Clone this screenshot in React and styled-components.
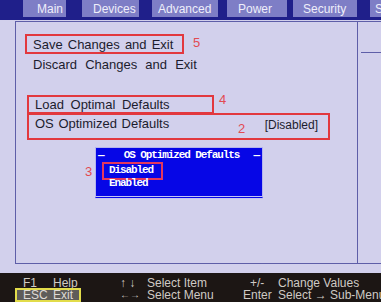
import React from 'react';
import styled, { createGlobalStyle } from 'styled-components';

const GlobalStyle = createGlobalStyle`
    * { box-sizing: border-box; }
    body {
        margin: 0;
        overflow: hidden;
        font-family: "Liberation Sans", Arial, sans-serif;
    }
`

const tabs = [
    { label: 'Main', w: 43, ml: 23, pl: 14 },
    { label: 'Devices', w: 57, ml: 16, pl: 11 },
    { label: 'Advanced', w: 66, ml: 13, pl: 6 },
    { label: 'Power', w: 60, ml: 9, pl: 11 },
    { label: 'Security', w: 64, ml: 6, pl: 10 },
    { label: 'S', w: 30, ml: 13, pl: 5 },
];

export default function App() {
    return (
        <Page>
            <GlobalStyle />
            <TabBar>
                {tabs.map(tab => (
                    <Tab key={tab.label} $w={tab.w} $ml={tab.ml} $pl={tab.pl}>{tab.label}</Tab>
                ))}
            </TabBar>

            <Body>
                <Panels>
                    <LeftPanel>
                        <Row $boxed $ml={9} $w={159} $h={20} $mt={12} $ws={1.5}>
                            Save Changes and Exit
                            <Note $x={166} $y={0}>5</Note>
                        </Row>
                        <Row $ml={9} $h={20} $ws={4.5}>Discard Changes and Exit</Row>
                        <Row $boxed $ml={11} $w={187} $h={19} $mt={21} $ws={3}>
                            Load Optimal Defaults
                            <Note $x={190} $y={-4}>4</Note>
                        </Row>
                        <Row $boxed $ml={11} $w={303} $h={27} $mt={-1} $ws={1} $top>
                            OS Optimized Defaults
                            <Value>[Disabled]</Value>
                            <Note $x={209} $y={7}>2</Note>
                        </Row>

                        <Popup>
                            <PopupTitle>
                                <span>—</span>
                                <span>OS Optimized Defaults</span>
                                <span>—</span>
                            </PopupTitle>
                            <Option $selected>
                                Disabled
                                <Note $x={-19} $y={1}>3</Note>
                            </Option>
                            <Option>Enabled</Option>
                        </Popup>
                    </LeftPanel>
                    <RightPanel>
                        <Divider />
                    </RightPanel>
                </Panels>
            </Body>

            <Footer>
                <KeyItem $pl={6}><Key $w={30}>F1</Key>Help</KeyItem>
                <KeyItem $pl={6} $active><Key $w={30}>ESC</Key>Exit</KeyItem>
                <KeyItem><Key $w={27}>↑ ↓</Key>Select Item</KeyItem>
                <KeyItem><Key $w={27} $small>←→</Key>Select Menu</KeyItem>
                <KeyItem $pl={7}><Key $w={28}>+/-</Key>Change Values</KeyItem>
                <KeyItem><Key $w={35}>Enter</Key>Select → Sub-Menu</KeyItem>
            </Footer>
        </Page>
    );
}

const Page = styled.div`
    width: 381px;
    height: 302px;
    display: flex;
    flex-direction: column;
    overflow: hidden;
    background: #d2d0ec;
`
const TabBar = styled.div`
    height: 20px;
    flex-shrink: 0;
    display: flex;
    align-items: flex-start;
    background: #1f1f8a;
    overflow: hidden;
`
const Tab = styled.div`
    flex-shrink: 0;
    width: ${p => p.$w}px;
    height: 17px;
    margin-left: ${p => p.$ml}px;
    padding-left: ${p => p.$pl}px;
    background: #7e7ec6;
    color: #eeeefa;
    font-size: 12px;
    line-height: 18px;
    white-space: nowrap;
`
const Body = styled.div`
    flex: 1;
    padding: 1px 0 9px 15px;
    background: #d2d0ec;
`
const Panels = styled.div`
    height: 243px;
    display: grid;
    grid-template-columns: 343px 1fr;
`
const LeftPanel = styled.div`
    position: relative;
    display: flex;
    flex-direction: column;
    align-items: flex-start;
    border: 1px solid #5e5ea8;
    color: #1c1c2e;
    font-size: 13px;
`
const RightPanel = styled.div`
    border-top: 1px solid #5e5ea8;
    border-bottom: 1px solid #5e5ea8;
    padding-top: 30px;
`
const Divider = styled.div`
    height: 1px;
    margin-left: 3px;
    background: #5e5ea8;
`
const Row = styled.div`
    position: relative;
    display: flex;
    align-items: ${p => p.$top ? 'flex-start' : 'center'};
    width: ${p => p.$w ? `${p.$w}px` : 'auto'};
    height: ${p => p.$h}px;
    margin-top: ${p => p.$mt || 0}px;
    margin-left: ${p => p.$ml}px;
    padding-left: 6px;
    padding-top: ${p => p.$top ? '1px' : '0'};
    border: 2px solid ${p => p.$boxed ? '#e2383e' : 'transparent'};
    word-spacing: ${p => p.$ws}px;
    white-space: nowrap;
    line-height: 15px;
`
const Value = styled.span`
    margin-left: auto;
    margin-top: 2px;
    padding-right: 10px;
    font-size: 12px;
    word-spacing: 0;
`
const Note = styled.span`
    position: absolute;
    left: ${p => p.$x}px;
    top: ${p => p.$y}px;
    color: #e24a52;
    font-family: "Liberation Sans", Arial, sans-serif;
    font-size: 13px;
    font-weight: 400;
    line-height: 13px;
    letter-spacing: 0;
`
const Popup = styled.div`
    position: absolute;
    left: 79px;
    top: 125px;
    width: 168px;
    height: 52px;
    background: #0606e6;
    border: 1px solid #b4b4ee;
    border-bottom: 3px double #c4c4f4;
    color: #ffffff;
    font-family: "Liberation Mono", "Courier New", monospace;
    font-weight: 700;
    font-size: 11px;
    letter-spacing: -1.1px;
`
const PopupTitle = styled.div`
    height: 14px;
    display: flex;
    justify-content: space-between;
    align-items: center;
    padding: 0 3px 0 2px;
    white-space: nowrap;
    span:nth-child(2) {
        margin-left: 6px;
    }
`
const Option = styled.div`
    position: relative;
    width: ${p => p.$selected ? '61px' : 'auto'};
    height: ${p => p.$selected ? '18px' : '12px'};
    margin-top: ${p => p.$selected ? '0' : '-3px'};
    margin-left: ${p => p.$selected ? '6px' : '13px'};
    padding-left: ${p => p.$selected ? '5px' : '0'};
    border: ${p => p.$selected ? '2px solid #e2385e' : 'none'};
    line-height: ${p => p.$selected ? '13px' : '12px'};
    white-space: nowrap;
`
const Footer = styled.div`
    height: 29px;
    flex-shrink: 0;
    display: grid;
    grid-template-columns: 103px 123px 1fr;
    grid-template-rows: 11px 14px;
    grid-auto-flow: column;
    padding: 4px 0 0 15px;
    background: #1c1614;
    color: #cfcac4;
    font-size: 12px;
`
const KeyItem = styled.div`
    justify-self: start;
    display: flex;
    align-items: center;
    padding-left: ${p => p.$pl || 0}px;
    padding-right: ${p => p.$active ? '6px' : '0'};
    border: 2px solid ${p => p.$active ? '#e2dc4a' : 'transparent'};
    background: ${p => p.$active ? '#5e5c5a' : 'transparent'};
    color: ${p => p.$active ? '#dedad6' : 'inherit'};
    white-space: nowrap;
    line-height: 12px;
`
const Key = styled.span`
    display: inline-block;
    width: ${p => p.$w}px;
    flex-shrink: 0;
    font-size: ${p => p.$small ? '10px' : 'inherit'};
`
